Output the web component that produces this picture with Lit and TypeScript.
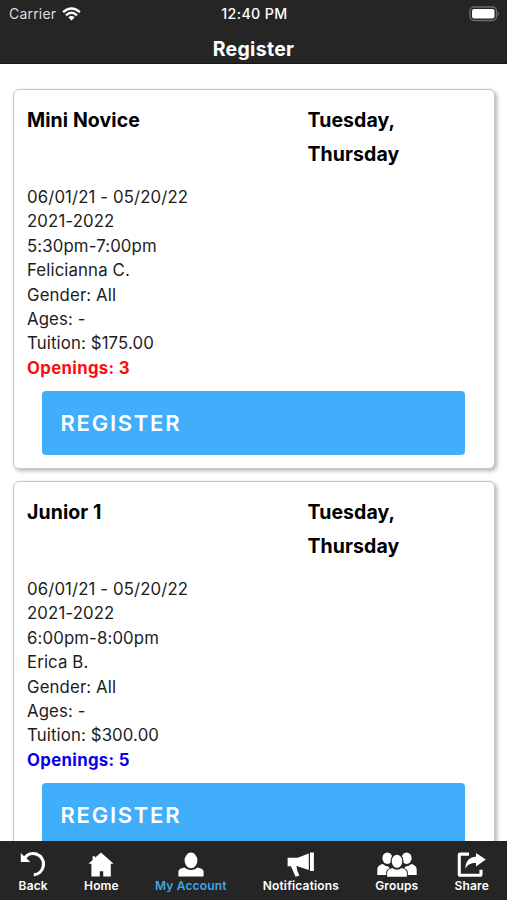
import { LitElement, html, css, svg } from "lit";
import { customElement, property } from "lit/decorators.js";
import { classMap } from "lit/directives/class-map.js";

interface ClassInfo {
  name: string;
  days: string[];
  details: string[];
  openings: number;
  low: boolean;
}

const classes: ClassInfo[] = [
  {
    name: "Mini Novice",
    days: ["Tuesday,", "Thursday"],
    details: ["06/01/21 - 05/20/22", "2021-2022", "5:30pm-7:00pm", "Felicianna C.", "Gender: All", "Ages: -", "Tuition: $175.00"],
    openings: 3,
    low: true,
  },
  {
    name: "Junior 1",
    days: ["Tuesday,", "Thursday"],
    details: ["06/01/21 - 05/20/22", "2021-2022", "6:00pm-8:00pm", "Erica B.", "Gender: All", "Ages: -", "Tuition: $300.00"],
    openings: 5,
    low: false,
  },
];

const tabs = [
  {
    label: "Back", w: 26,
    icon: svg`<path d="M.8 2V11H10.2L7.2 8L3.8 5Z" fill="currentColor"/><path d="M4.4 7.4C7.2 3.2 12 1.6 16.2 3.1C21.3 4.9 24.4 9.8 23.4 14.8C22.4 20 18.5 23.6 13.8 23.9" fill="none" stroke="currentColor" stroke-width="3.2"/>`,
  },
  {
    label: "Home", w: 26,
    icon: svg`<path d="M13 1.4L25.6 12.8H22.8V25.4H15.2V20.2H11.8V25.4H3.4V12.8H.4L4.6 9V5.2H7V6.8Z" fill="currentColor"/>`,
  },
  {
    label: "My Account", w: 26,
    icon: svg`<ellipse cx="13" cy="9.4" rx="6.4" ry="7.8" fill="currentColor"/><path d="M.4 24.9V21C.4 17.9 2.9 17.3 6.6 16.4C8.2 18 10.4 18.9 13 18.9S17.8 18 19.4 16.4C23.1 17.3 25.6 17.9 25.6 21V24.9Q25.6 25.6 24.9 25.6H1.1Q.4 25.6 .4 24.9Z" fill="currentColor"/>`,
  },
  {
    label: "Notifications", w: 28,
    icon: svg`<path d="M.6 6.7H10.6L21.8 2.4V18.9L10.6 15.2H9.4Q10 20.5 12.4 24.6L8.6 25.8L3.9 15.2H.6ZM23 1.6H26.9V20.1H23Z" fill="currentColor"/>`,
  },
  {
    label: "Groups", w: 40,
    icon: svg`<g fill="currentColor"><ellipse cx="10.4" cy="7.2" rx="5" ry="5.8"/><ellipse cx="29.6" cy="7.2" rx="5" ry="5.8"/><path d="M.3 24V18.5C.3 15.5 2.1 14.1 5.8 13.1Q7.9 15.3 11.2 15.4L12.8 17.2Q9.4 18.6 9.2 20.8V24ZM39.7 24V18.5C39.7 15.5 37.9 14.1 34.2 13.1Q32.1 15.3 28.8 15.4L27.2 17.2Q30.6 18.6 30.8 20.8V24Z"/><ellipse cx="20" cy="10.2" rx="5.9" ry="7.2" stroke="#252525" stroke-width="1.3"/><path d="M10.1 25.7V22.1C10.1 19.3 12.2 18.2 15.4 17.1Q17.3 18.8 20 18.8T24.6 17.1C27.8 18.2 29.9 19.3 29.9 22.1V25.7Z"/></g>`,
  },
  {
    label: "Share", w: 29,
    icon: svg`<path d="M12 3.1H3.3Q2.3 3.1 2.3 4.1V23.2Q2.3 24.2 3.3 24.2H23Q24 24.2 24 23.2V18.8" fill="none" stroke="currentColor" stroke-width="3.1"/><path d="M19 2L28.8 8.6L19 15.4V11.9C14 11.8 10.8 13.3 8.3 17.7C8.4 10.5 11.9 6.2 19 5.7Z" fill="currentColor"/>`,
  },
];

@customElement("class-card")
export class ClassCard extends LitElement {
  @property({ attribute: false }) info!: ClassInfo;

  static styles = css`
    :host {
      display: block;
      box-sizing: border-box;
      height: 380px;
      padding: 13px 13px 0;
      border: 1px solid #c6c6c6;
      border-radius: 6px;
      background: #fff;
      box-shadow: 2px 2px 4px rgba(0, 0, 0, 0.3);
      color: #000;
    }
    .head {
      display: grid;
      grid-template-columns: 280.5px 1fr;
      height: 82px;
      font-size: 19.5px;
      font-weight: 700;
      line-height: 34px;
      letter-spacing: 0.08px;
    }
    .line {
      height: 24.4px;
      font-size: 16.8px;
      line-height: 24.4px;
      letter-spacing: 0.12px;
      color: #1c1c1c;
      white-space: nowrap;
    }
    .openings { font-weight: 700; color: #0800ee; letter-spacing: 0.33px; }
    .openings.low { color: #fa0d0d; }
    .button {
      display: flex;
      align-items: center;
      box-sizing: border-box;
      width: 423px;
      height: 64px;
      margin: 10.8px 0 0 15px;
      padding: 0 18.5px;
      border: 0;
      border-radius: 4px;
      background: #41aefb;
      color: #fff;
      font: 600 22px Inter, sans-serif;
      letter-spacing: 1.75px;
    }
  `;

  render() {
    const c = this.info;
    return html`
      <div class="head">
        <div>${c.name}</div>
        <div>${c.days.map((d) => html`<div>${d}</div>`)}</div>
      </div>
      ${c.details.map((d) => html`<div class="line">${d}</div>`)}
      <div class=${classMap({ line: true, openings: true, low: c.low })}>Openings: ${c.openings}</div>
      <button class="button">REGISTER</button>
    `;
  }
}

@customElement("app-root")
export class AppRoot extends LitElement {
  static styles = css`
    :host {
      display: flex;
      flex-direction: column;
      width: 507px;
      height: 900px;
      overflow: hidden;
      background: #fff;
      font-family: Inter, sans-serif;
    }
    .top {
      flex: none;
      box-sizing: border-box;
      height: 64px;
      background: #252525;
      border-bottom: 1px solid #161616;
      color: #fff;
    }
    .status {
      display: grid;
      grid-template-columns: 1fr auto 1fr;
      align-items: center;
      height: 27px;
      padding: 0 7px 0 9px;
      font-size: 14px;
      font-weight: 500;
      letter-spacing: 0.3px;
    }
    .carrier { display: flex; align-items: center; gap: 5.5px; font-weight: 400; color: #ddd; letter-spacing: 0.2px; }
    .time { font-size: 14.2px; letter-spacing: 0.4px; }
    .battery { justify-self: end; display: block; }
    .title {
      height: 37px;
      line-height: 44px;
      text-align: center;
      font-size: 19.5px;
      font-weight: 700;
      letter-spacing: 0.3px;
    }
    .list {
      flex: 1;
      min-height: 0;
      overflow: hidden;
      display: flex;
      flex-direction: column;
      gap: 12px;
      padding: 25px 12px 0 13px;
    }
    .card { flex: none; }
    .tabs {
      flex: none;
      box-sizing: border-box;
      display: flex;
      justify-content: space-between;
      height: 59px;
      padding: 10px 18px 0 18.6px;
      background: #252525;
      color: #fff;
    }
    .tab {
      display: flex;
      flex-direction: column;
      align-items: center;
      font-size: 12px;
      font-weight: 600;
      line-height: 18px;
      letter-spacing: 0.15px;
      white-space: nowrap;
    }
    .icon { display: block; }
    .on .label { color: #41a5ea; }
  `;

  render() {
    return html`
      <header class="top">
        <div class="status">
          <div class="carrier">
            <span>Carrier</span>
            <svg width="19" height="14" viewBox="0 0 19 14" fill="none" stroke="#fff" stroke-width="2.4">
              <path d="M1.1 5.2Q9.5 -2.4 17.9 5.2" />
              <path d="M4 8.3Q9.5 3.2 15 8.3" />
              <path d="M9.5 13.5L6.3 10.3Q9.5 7.8 12.7 10.3Z" fill="#fff" stroke="none" />
            </svg>
          </div>
          <div class="time">12:40 PM</div>
          <svg class="battery" width="31" height="16" viewBox="0 0 31 16">
            <rect x="1" y="1" width="26.5" height="13.5" rx="4" fill="none" stroke="#6d6d6d" stroke-width="1.4" />
            <rect x="3" y="3" width="22.5" height="9.5" rx="2" fill="#fff" />
            <path d="M28.7 5.2Q31 7.7 28.7 10.2Z" fill="#777" />
          </svg>
        </div>
        <div class="title">Register</div>
      </header>
      <main class="list">
        ${classes.map((c) => html`<class-card class="card" .info=${c}></class-card>`)}
      </main>
      <nav class="tabs">
        ${tabs.map(
          (t) => html`
            <div class=${classMap({ tab: true, on: t.label === "My Account" })}>
              <svg class="icon" width=${t.w} height="26" viewBox="0 0 ${t.w} 26">${t.icon}</svg>
              <span class="label">${t.label}</span>
            </div>
          `
        )}
      </nav>
    `;
  }
}
